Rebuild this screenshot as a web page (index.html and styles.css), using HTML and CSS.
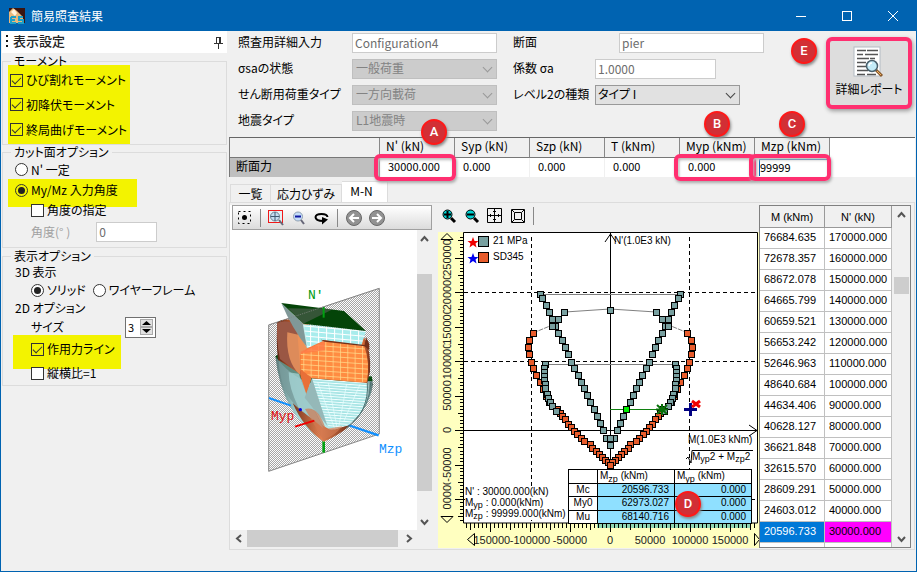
FILE: index.html
```
<!DOCTYPE html>
<html lang="ja">
<head>
    <meta charset="UTF-8">
    <meta name="viewport" content="width=device-width, initial-scale=1.0">
    <title>簡易照査結果</title>
    <link rel="stylesheet" href="styles.css">
</head>
<body>
<div class="window">
  <header class="titlebar">
    <svg class="app-icon" width="18" height="18" viewBox="0 0 18 18">
      <rect x="1" y="1" width="16" height="15" fill="#3a1410"/>
      <path d="M1 16V5l4-4 4 3 6 6v6z" fill="#e8b87c"/>
      <path d="M3 5l3-3 3 4-2 3z" fill="#fff3dc"/>
      <path d="M3 10h5M3 10v6h5M3 13h4M15 10h-4v3h4v3h-5" fill="none" stroke="#1dA0c8" stroke-width="2"/>
    </svg>
    <h1>簡易照査結果</h1>
    <button type="button" class="win-btn" aria-label="最小化"><svg width="11" height="11"><path d="M0 5.500h10" stroke="#fff"/></svg></button>
    <button type="button" class="win-btn" aria-label="最大化"><svg width="11" height="11"><rect x=".5" y=".5" width="9" height="9" fill="none" stroke="#fff"/></svg></button>
    <button type="button" class="win-btn" aria-label="閉じる"><svg width="11" height="11"><path d="M0 0l10 10M10 0L0 10" stroke="#fff"/></svg></button>
  </header>

  <div class="content">
    <aside class="sidebar">
      <div class="panel-head">
        <svg width="4" height="16"><path d="M2 1v15" stroke="#111" stroke-width="2" stroke-dasharray="2 3"/></svg>
        <h2>表示設定</h2>
        <svg width="11" height="13"><path d="M3.500 1v6M7.500 1v6M3 1.500h5M1 7.500h9M5.500 8v5M6.500 2v5" fill="none" stroke="#333"/></svg>
      </div>

      <fieldset class="group">
        <legend>モーメント</legend>
        <div class="mark mark-moment">
          <label><input type="checkbox" checked>ひび割れモーメント</label>
          <label><input type="checkbox" checked>初降伏モーメント</label>
          <label><input type="checkbox" checked>終局曲げモーメント</label>
        </div>
      </fieldset>

      <fieldset class="group group-cut">
        <legend>カット面オプション</legend>
        <label class="line-const"><input type="radio" name="cut">N' 一定</label>
        <div class="mark mark-cut">
          <label><input type="radio" name="cut" checked>My/Mz 入力角度</label>
        </div>
        <label class="indent line-angle"><input type="checkbox">角度の指定</label>
        <div class="indent angle-row">
          <label for="angle">角度(° )</label>
          <input type="text" id="angle" class="box" value="0" disabled>
        </div>
      </fieldset>

      <fieldset class="group group-view">
        <legend>表示オプション</legend>
        <div class="sub">3D 表示</div>
        <div class="indent radios">
          <label><input type="radio" name="view" checked>ソリッド</label>
          <label><input type="radio" name="view">ワイヤーフレーム</label>
        </div>
        <div class="sub">2D オプション</div>
        <div class="indent size-row">
          <label for="size">サイズ</label>
          <div class="spinner">
            <input type="text" id="size" value="3">
            <div>
              <button type="button" aria-label="増やす"><svg width="11" height="6"><path d="M1 5h9L5.500 1z"/></svg></button>
              <button type="button" aria-label="減らす"><svg width="11" height="6"><path d="M1 1h9L5.500 5z"/></svg></button>
            </div>
          </div>
        </div>
        <div class="mark mark-line">
          <label><input type="checkbox" checked>作用力ライン</label>
        </div>
        <label class="indent"><input type="checkbox">縦横比=1</label>
      </fieldset>
    </aside>

    <main class="main">
      <div class="top">
        <div class="fields">
          <div class="field"><label for="conf">照査用詳細入力</label><input type="text" id="conf" class="box wide" value="Configuration4" disabled></div>
          <div class="field"><label for="ssa">σsaの状態</label><span class="select wide"><select id="ssa" disabled><option>一般荷重</option></select></span></div>
          <div class="field"><label for="shear">せん断用荷重タイプ</label><span class="select wide"><select id="shear" disabled><option>一方向載荷</option></select></span></div>
          <div class="field"><label for="quake">地震タイプ</label><span class="select wide"><select id="quake" disabled><option>L1地震時</option></select></span></div>
        </div>
        <div class="fields fields-right">
          <div class="field"><label for="sec" class="label-sec">断面</label><input type="text" id="sec" class="box wide" value="pier" disabled></div>
          <div class="field"><label for="coef">係数 σa</label><input type="text" id="coef" class="box coef" value="1.0000" disabled></div>
          <div class="field"><label for="level">レベル2の種類</label><span class="select wide active"><select id="level"><option>タイプ I</option></select></span></div>
        </div>
        <div class="report">
          <span class="badge badge-e">E</span>
          <button type="button" class="report-btn">
            <svg width="32" height="32" viewBox="0 0 32 32">
              <rect x="1" y="1" width="26" height="29" fill="#fff" stroke="#b4bcc4"/>
              <path d="M4 4.500h9m1 0h11M4 8.500h6m2 0h13M4 12.500h12m1 0h5M4 16.500h9M4 20.500h9M4 24.500h11M4 28.500h8m2 0h9" stroke="#555" stroke-width="1.500"/>
              <path d="M23 24l6 6" stroke="#8a5a2c" stroke-width="3"/>
              <path d="M24 25l4 4" stroke="#f0b060"/>
              <circle cx="19" cy="20" r="5.500" fill="#c4ecf8" stroke="#4a606c" stroke-width="1.500"/>
              <path d="M16 20q0-3 3-3" stroke="#fff" stroke-width="1.500" fill="none"/>
            </svg>
            <span>詳細レポート</span>
          </button>
        </div>
      </div>

      <div class="force-wrap">
      <table class="force">
        <tr>
          <th></th><th>N' (kN)</th><th>Syp (kN)</th><th>Szp (kN)</th><th>T (kNm)</th><th>Myp (kNm)</th><th>Mzp (kNm)</th>
        </tr>
        <tr>
          <th scope="row">断面力</th>
          <td>30000.000<span class="frame"><span class="badge badge-a">A</span></span></td>
          <td>0.000</td>
          <td>0.000</td>
          <td>0.000</td>
          <td>0.000<span class="frame"><span class="badge badge-b">B</span></span></td>
          <td class="edit"><input type="text" value="99999" aria-label="Mzp (kNm)"><span class="frame"><span class="badge badge-b">C</span></span></td>
        </tr>
      </table>
      </div>

      <nav class="tabs">
        <button type="button" class="tab tab-list">一覧</button>
        <button type="button" class="tab tab-strain">応力ひずみ</button>
        <button type="button" class="tab tab-mn on">M-N</button>
      </nav>

      <section class="tab-page">
        <div class="view3d">
          <div class="tools">
            <button type="button" aria-label="全体表示"><svg width="16" height="16"><rect x="1.500" y="1.500" width="12" height="12" fill="none" stroke="#000" stroke-dasharray="2 3"/><circle cx="7.500" cy="7.500" r="2.500"/></svg></button>
            <i></i>
            <button type="button" aria-label="拡大"><svg width="16" height="16"><rect x=".5" y=".5" width="14" height="12" fill="#e4f0f4" stroke="#f01818"/><circle cx="7" cy="6.500" r="4.500" fill="#c4dcf0" stroke="#708090"/><path d="M7 2v9M2.500 6.500h9" stroke="#405870"/><path d="M11 10l4 5" stroke="#667" stroke-width="2"/></svg></button>
            <button type="button" aria-label="縮小"><svg width="16" height="16"><circle cx="7" cy="6.500" r="4.500" fill="#c4dcf8" stroke="#90a0b0"/><path d="M4 6.500h6" stroke="#1018a0" stroke-width="2"/><path d="M10 10l3 4" stroke="#667" stroke-width="2"/></svg></button>
            <button type="button" aria-label="回転"><svg width="16" height="16"><path d="M13.500 7C13 3 2 3 1.500 7c0 3 4 4 8 4" fill="none" stroke="#000" stroke-width="2"/><path d="M8 7l6 2.500-6 5z"/></svg></button>
            <i></i>
            <button type="button" aria-label="戻る"><svg width="18" height="18"><circle cx="9" cy="9" r="7.500" fill="#929292" stroke="#686868"/><path d="M14 9H5M9 5L5 9l4 4" fill="none" stroke="#fff" stroke-width="2"/></svg></button>
            <button type="button" aria-label="進む"><svg width="18" height="18"><circle cx="9" cy="9" r="7.500" fill="#929292" stroke="#686868"/><path d="M4 9h9M9 5l4 4-4 4" fill="none" stroke="#fff" stroke-width="2"/></svg></button>
          </div>
          <div class="canvas3d">
            <svg class="solid" viewBox="0 0 186 300">
              <defs>
                <pattern id="dots" width="6" height="6" patternUnits="userSpaceOnUse"><path d="M0 0h3v3H0zM3 3h3v3H3z" fill="#a4a4a4"/></pattern>
                <pattern id="gridOrange" width="22" height="15" patternUnits="userSpaceOnUse" patternTransform="skewY(4)"><rect width="22" height="15" fill="#ff8c42"/><path d="M0 1.500h22M1.500 0v15" stroke="#ffe090" stroke-width="2"/></pattern>
                <pattern id="gridPale" width="24" height="15" patternUnits="userSpaceOnUse" patternTransform="skewY(5)"><rect width="24" height="15" fill="#a8ecec"/><path d="M0 1.500h24M1.500 0v15" stroke="#fff" stroke-width="3"/></pattern>
                <pattern id="gridCyan" width="26" height="8" patternUnits="userSpaceOnUse" patternTransform="skewY(4)"><rect width="26" height="8" fill="#a4e4e4"/><path d="M0 1.500h26" stroke="#f4ffff" stroke-width="3"/></pattern>
                <linearGradient id="tip" x1="0" x2="1" y1="0" y2="0"><stop offset="0" stop-color="#7a3820"/><stop offset=".5" stop-color="#e08050"/><stop offset="1" stop-color="#702c14"/></linearGradient>
                <linearGradient id="shade" x1="0" x2="1" y1="0" y2="0"><stop offset="0" stop-color="#5c2414"/><stop offset=".25" stop-color="#f07838"/><stop offset=".9" stop-color="#f88040"/><stop offset="1" stop-color="#6a2c18"/></linearGradient>
                <linearGradient id="side" x1="0" x2="1" y1="0" y2="0"><stop offset="0" stop-color="#5c7878"/><stop offset=".25" stop-color="#a8dcdc"/><stop offset=".9" stop-color="#c8f8f8"/><stop offset="1" stop-color="#506868"/></linearGradient>
              </defs>
              <g transform="translate(-1 39) scale(.3333)">
                <path d="M116 168L448 58V495L116 607z" fill="url(#dots)" stroke="#888" stroke-width="3"/>
                <path d="M354 468L446 499" stroke="#1090ff" stroke-width="7"/>
                <path d="M281 513v38" stroke="#00a010" stroke-width="8"/>
                <path d="M136 262l14-6 275 74 4 16q-12 100-148 172Q154 438 136 262z" fill="url(#side)"/>
                <path d="M188 402Q240 450 300 482l62-14q-36 32-81 50-60-40-93-116z" fill="url(#tip)"/>
                <path d="M136 262q8-8 24 0l48 50q100 20 217 10l3 14-188 6q-60-20-104-80z" fill="#064a10"/>
                <path d="M246 328l168 14q6 30-22 88-40 50-88 52-24-30-64-104z" fill="url(#gridCyan)"/>
                <path d="M412 342q6 86-64 136M422 340q0 70-54 120" fill="none" stroke="#4c7070" stroke-width="3"/>
                <path d="M263 340l52 142M295 342l27 138M350 345l-24 130M390 346l-48 110" stroke="#e8ffff" stroke-width="2"/>
                <path d="M146 270Q150 370 206 418l76 60-52-100-22-66z" fill="#789c9c" opacity=".8"/>
                <path d="M176 310l30 4 24 64 50 100-74-62q-30-60-30-106z" fill="#a8d8d8" opacity=".7"/>
                <path d="M142 160q20-14 50-4l212 52q20 40 16 100l-8 34-168-14-14 50-20-64-66-42Q138 220 142 160z" fill="url(#shade)"/>
                <path d="M142 162q24-12 58 4l12 150-62-46q-12-54-8-108z" fill="#9a5744"/>
                <path d="M172 190l52 12 8 36-22 20v60q-44-40-38-128z" fill="#ee9860" opacity=".8"/>
                <path d="M212 254l72-38 118 14q20 50 8 110l-164-14-34-20z" fill="url(#gridOrange)"/>
                <path d="M212 248l72-32v28l-72 10z" fill="#ff7c48" opacity=".8"/>
                <path d="M212 300l32 26-14 50-18-54z" fill="#e87038"/>
                <path d="M154 102l66 64 188 20-14 44-110-16-52 24z" fill="url(#gridPale)"/>
                <path d="M154 102l66 64 12 70q-44-54-78-134z" fill="#809898"/>
                <path d="M220 166l12 70" stroke="#d8ffff" stroke-width="2"/>
                <path d="M154 102l188 24 66 60-188-22z" fill="#044408"/>
                <path d="M174 118l46 46 90-44z" fill="#666" opacity=".5"/>
                <path d="M272 212l132 16 4-24 10 20v20l-14-12-120-14z" fill="#743018"/>
                <path d="M281 114v32" stroke="#00a010" stroke-width="6"/>
                <path d="M246 328l-22 58 68 84z" fill="#95b8b8"/>
                <path d="M225 420q40-10 62 60l50-8q-24 30-58 40z" fill="#d07850" opacity=".7"/>
                <path d="M117 387l66 23" stroke="#1090ff" stroke-width="6"/>
                <path d="M195 473l58-18" stroke="#f00000" stroke-width="6"/>
                <circle cx="211" cy="422" r="5" fill="#0000e0"/>
                <path d="M116 168L448 58" stroke="#888" stroke-width="2" stroke-dasharray="4 3"/>
              </g>
              <g class="axis-name">
                <text x="77" y="69" fill="#009a10">N'</text>
                <text x="40" y="190" fill="#e01010">Myp</text>
                <text x="148" y="223" fill="#1090ff">Mzp</text>
              </g>
            </svg>
            <div class="vbar">
              <svg width="9" height="17"><path d="M1 11l3.500-4L8 11" fill="none" stroke="#555" stroke-width="2"/></svg>
              <b></b>
              <svg width="9" height="17"><path d="M1 7l3.500 4L8 7" fill="none" stroke="#555" stroke-width="2"/></svg>
            </div>
          </div>
          <div class="hbar">
            <svg width="17" height="9"><path d="M11 1L7 4.500 11 8" fill="none" stroke="#555" stroke-width="2"/></svg>
            <b></b>
            <svg width="17" height="9"><path d="M7 1l4 3.500L7 8" fill="none" stroke="#555" stroke-width="2"/></svg>
          </div>
        </div>

        <div class="view2d">
          <div class="tools2">
            <button type="button" aria-label="拡大"><svg width="16" height="16"><circle cx="6.500" cy="6.500" r="4.500" fill="#00d0d0" stroke="#000"/><path d="M3 6.500h7M6.500 3v7" stroke="#000" stroke-width="2"/><path d="M10 10l4 4" stroke="#000" stroke-width="3"/></svg></button>
            <button type="button" aria-label="縮小"><svg width="16" height="16"><circle cx="6.500" cy="6.500" r="4.500" fill="#00d0d0" stroke="#000"/><path d="M3 6.500h7" stroke="#000" stroke-width="2"/><path d="M10 10l4 4" stroke="#000" stroke-width="3"/></svg></button>
            <button type="button" aria-label="移動"><svg width="16" height="16"><path d="M.5 .5h14v14H.5zM7.500 1v13M1 7.500h13M6 3.500h3M6 11.500h3M3.500 6v3M11.500 6v3" fill="none" stroke="#000"/></svg></button>
            <button type="button" aria-label="全体"><svg width="16" height="16"><path d="M1.500 1.500h13v13h-13zM4.500 4.500h7v7h-7zM2 2l2 2M14 2l-2 2M2 14l2-2M14 14l-2-2" fill="none" stroke="#000"/></svg></button>
            <i></i>
          </div>
          <svg id="chart" class="chart" viewBox="0 0 321 316">
            <rect width="321" height="316" fill="#ffffc0"/>
            <path d="M159 291h154v5H159z" fill="#8fd8b4"/>
            <g id="ticks" stroke="#000"></g>
            <g id="labels"></g>
            <path d="M3 7.500h12L9 1.500zM3 284.500h12l-6 6zM36.500 301.500v12l-7-6zM316.500 301.500v12l5-6z" fill="#ffffc0" stroke="#000"/>
            <path d="M25.500 .5h294v290.500h-294z" fill="#fff" stroke="#000"/>
            <path d="M93.500 5v286M251.500 5v286M26 60.500h293M26 129.500h293M26 267.500h293" stroke="#000" stroke-dasharray="4 3"/>
            <path d="M172.500 1v290M26 198.500h293" stroke="#000"/>
            <path d="M167 10l5.500-8 5.500 8M311 193l8 5.500-8 5.500" fill="none" stroke="#000"/>
            <path d="M102 62.500h140M107 132.500h130M127 80l45-3 46 3" fill="none" stroke="#808080"/>
            <path d="M95 101l17-7M250 101l-17-7" stroke="#808080" stroke-dasharray="5 1"/>
            <path d="M172 177.500h52" stroke="#108010"/>
            <g id="marks" stroke="#000"></g>
            <path d="M219 173l10 9m0-9l-10 9m5-10v11m-6-5.500h12" stroke="#087008" stroke-width="2"/>
            <path d="M252.500 171v13M246 177.500h13" stroke="#000080" stroke-width="3"/>
            <path d="M254 169l8 6m0-6l-8 6" stroke="#f00000" stroke-width="3"/>
            <path d="M35 5l1.500 4h4l-3 2.500 1 4L35 13l-3.500 2.500 1-4-3-2.500h4z" fill="#f00000"/>
            <path d="M35 21l1.500 4h4l-3 2.500 1 4L35 29l-3.500 2.500 1-4-3-2.500h4z" fill="#0000f0"/>
            <rect x="40.500" y="4.500" width="10" height="10" fill="#78a0a0" stroke="#000"/>
            <rect x="40.500" y="20.500" width="10" height="10" fill="#e85c2c" stroke="#000"/>
            <path d="M27 254h102v34H27z" fill="#fff"/>
            <g class="note">
              <text x="55" y="12">21 MPa</text>
              <text x="55" y="28">SD345</text>
              <text x="176" y="12">N'(1.0E3 kN)</text>
              <text x="250" y="211">M(1.0E3 kNm)</text>
              <text x="254" y="228">M<tspan class="low" dy="2">yp</tspan><tspan dy="-2">2 + M</tspan><tspan class="low" dy="2">zp</tspan><tspan dy="-2">2</tspan></text>
              <text x="27" y="263">N' : 30000.000(kN)</text>
              <text x="27" y="274">M<tspan class="low" dy="2">yp</tspan><tspan dy="-2"> : 0.000(kNm)</tspan></text>
              <text x="27" y="285">M<tspan class="low" dy="2">zp</tspan><tspan dy="-2"> : 99999.000(kNm)</tspan></text>
            </g>
            <path d="M248 227l2-2 3 6 1-12.500h61" fill="none" stroke="#000"/>
            <foreignObject x="130" y="237" width="184" height="55">
              <table class="result">
                <tr><th></th><th>M<sub>zp</sub> (kNm)</th><th>M<sub>yp</sub> (kNm)</th></tr>
                <tr><th>Mc</th><td>20596.733</td><td>0.000</td></tr>
                <tr><th>My0</th><td>62973.027</td><td>0.000</td></tr>
                <tr><th>Mu</th><td>68140.716</td><td>0.000</td></tr>
              </table>
            </foreignObject>
          </svg>
          <span class="badge badge-d">D</span>
        </div>

        <div class="list">
          <table>
            <thead><tr><th>M (kNm)</th><th>N' (kN)</th></tr></thead>
            <tbody>
              <tr><td>76684.635</td><td>170000.000</td></tr>
              <tr><td>72678.357</td><td>160000.000</td></tr>
              <tr><td>68672.078</td><td>150000.000</td></tr>
              <tr><td>64665.799</td><td>140000.000</td></tr>
              <tr><td>60659.521</td><td>130000.000</td></tr>
              <tr><td>56653.242</td><td>120000.000</td></tr>
              <tr><td>52646.963</td><td>110000.000</td></tr>
              <tr><td>48640.684</td><td>100000.000</td></tr>
              <tr><td>44634.406</td><td>90000.000</td></tr>
              <tr><td>40628.127</td><td>80000.000</td></tr>
              <tr><td>36621.848</td><td>70000.000</td></tr>
              <tr><td>32615.570</td><td>60000.000</td></tr>
              <tr><td>28609.291</td><td>50000.000</td></tr>
              <tr><td>24603.012</td><td>40000.000</td></tr>
              <tr class="current"><td>20596.733</td><td>30000.000</td></tr>
              <tr class="rest"><td></td><td></td></tr>
            </tbody>
          </table>
          <div class="vbar list-bar">
            <svg width="9" height="17"><path d="M1 11l3.500-4L8 11" fill="none" stroke="#555" stroke-width="2"/></svg>
            <b></b>
            <svg width="9" height="17"><path d="M1 7l3.500 4L8 7" fill="none" stroke="#555" stroke-width="2"/></svg>
          </div>
        </div>
      </section>
    </main>
  </div>
</div>
<script src="chart.js"></script>
</body>
</html>
```
FILE: styles.css
```
* {
  box-sizing: border-box;
  }
body {
  margin: 0;
  font-family: "Noto Sans CJK JP", sans-serif;
  font-size: 12px;
  line-height: 16px;
  color: #000;
  background-color: #f0f0f0;
  font-feature-settings: "palt";
  }
h1, h2 {
  margin: 0;
  font-size: 12px;
  font-weight: 400;
  }
button, input, select {
  font: inherit;
  font-feature-settings: inherit;
  color: inherit;
  margin: 0;
  padding: 0;
  }
button {
  background: none;
  border: 0;
  }
svg {
  display: block;
  flex: none;
  }
.window {
  min-height: 100vh;
  border: 1px solid #0063b1;
  display: flex;
  flex-direction: column;
  }
.titlebar {
  display: flex;
  align-items: center;
  height: 30px;
  padding-left: 7px;
  background-color: #0063b1;
  color: #fff;
  }
.titlebar h1 {
  flex: 1;
  margin-left: 5px;
  font-feature-settings: normal;
  }
.win-btn {
  width: 46px;
  height: 30px;
  display: flex;
  align-items: center;
  justify-content: center;
  }
.content {
  flex: 1;
  display: flex;
  align-items: flex-start;
  }

/* sidebar */
.sidebar {
  width: 227px;
  flex: none;
  padding: 0 1px;
  }
.panel-head {
  display: flex;
  align-items: center;
  height: 22px;
  padding: 0 3px;
  background-color: #fff;
  }
.panel-head h2 {
  flex: 1;
  margin-left: 4px;
  padding-bottom: 2px;
  font-weight: 500;
  font-size: 13px;
  color: #222;
  font-feature-settings: normal;
  }
.group {
  margin: 0;
  padding: 0 6px;
  border: 1px solid #dcdcdc;
  min-width: 0;
  }
.group legend {
  height: 16px;
  margin-left: 2px;
  padding: 0 3px;
  }
.group label {
  display: flex;
  align-items: center;
  white-space: nowrap;
  }
.mark {
  width: max-content;
  background-color: #f3f300;
  }
.mark-moment {
  height: 79px;
  margin: -4px 0 0 -1px;
  padding: 3px 3px 0 2px;
  }
.mark-moment label {
  height: 25px;
  }
.mark-moment label:first-child {
  height: 24px;
  }
input[type=checkbox], input[type=radio] {
  appearance: none;
  flex: none;
  width: 13px;
  height: 13px;
  margin-right: 3px;
  border: 1px solid #333;
  background-color: #fff;
  }
input[type=radio] {
  border-radius: 50%;
  }
.mark input[type=checkbox], .mark input[type=radio] {
  background-color: #f3f300;
  }
input[type=checkbox]:checked::before {
  content: "";
  display: block;
  width: 8px;
  height: 4px;
  margin: 2px 0 0 1px;
  border: solid #333;
  border-width: 0 0 1px 1px;
  transform: rotate(-45deg);
  }
input[type=radio]:checked::before {
  content: "";
  display: block;
  width: 7px;
  height: 7px;
  margin: 2px;
  border-radius: 50%;
  background-color: #222;
  }
.group-cut {
  margin-top: -1px;
  padding-bottom: 5px;
  }
.line-const {
  height: 19px;
  padding-left: 6px;
  }
.mark-cut {
  height: 28px;
  margin-left: -1px;
  padding: 2px 19px 0 7px;
  }
.mark-cut label {
  height: 18px;
  }
.indent {
  margin-left: 22px;
  }
.line-angle {
  height: 16px;
  margin-top: -5px;
  }
.angle-row {
  display: flex;
  align-items: center;
  gap: 26px;
  margin-top: 4px;
  color: #a0a0a0;
  }
.box {
  height: 20px;
  padding: 0 0 2px 2px;
  border: 1px solid #ccc;
  background-color: #fff;
  color: #6d6d6d;
  }
.angle-row .box {
  width: 61px;
  }
.group-view {
  height: 138px;
  }
.group-view .sub {
  margin-left: 6px;
  }
.radios {
  display: flex;
  gap: 7px;
  height: 20px;
  }
.size-row {
  display: flex;
  align-items: center;
  justify-content: space-between;
  width: 125px;
  height: 22px;
  }
.spinner {
  display: flex;
  width: 31px;
  height: 21px;
  padding: 1px 2px;
  border: 1px solid #707070;
  background-color: #fff;
  }
.spinner input {
  width: 12px;
  height: 16px;
  border: 0;
  font-size: 11px;
  }
.spinner button {
  display: block;
  width: 13px;
  height: 8px;
  border: 1px solid #aaa;
  background-color: #e1e1e1;
  }
.mark-line {
  height: 34px;
  margin: -3px 0 0 4px;
  padding: 6px 6px 0 18px;
  }
.mark-line + label {
  margin-top: -4px;
  }

/* settings */
.main {
  flex: 1;
  min-width: 0;
  padding: 2px 1px 0;
  }
.top {
  display: flex;
  gap: 16px;
  padding-left: 9px;
  }
.fields {
  display: flex;
  flex-direction: column;
  gap: 6px;
  }
.field {
  display: flex;
  align-items: center;
  height: 20px;
  }
.field label {
  width: 114px;
  padding-bottom: 2px;
  white-space: nowrap;
  }
.fields-right label {
  width: 82px;
  }
.fields-right .label-sec {
  width: 106px;
  }
.wide {
  width: 145px;
  }
.coef {
  width: 121px;
  }
.select {
  position: relative;
  height: 20px;
  }
.select select {
  appearance: none;
  width: 100%;
  height: 20px;
  padding: 0 0 2px 3px;
  border: 1px solid #bfbfbf;
  border-radius: 0;
  background-color: #ccc;
  color: #838383;
  opacity: 1;
  }
.select.active select {
  border-color: #999;
  background-color: #e1e1e1;
  color: #000;
  padding-left: 2px;
  }
.select::after {
  content: "";
  position: absolute;
  right: 6px;
  top: 5px;
  width: 6px;
  height: 6px;
  border: solid #999;
  border-width: 0 1px 1px 0;
  transform: rotate(45deg);
  }
.select.active::after {
  border-color: #444;
  }
.report {
  position: relative;
  margin-left: auto;
  padding: 4px 3px 0 0;
  }
.report-btn {
  display: flex;
  flex-direction: column;
  align-items: center;
  justify-content: center;
  gap: 3px;
  width: 86px;
  height: 72px;
  padding-bottom: 3px;
  border: 4px solid #ff2f70;
  border-radius: 6px;
  background-color: #ddd;
  box-shadow: 1px 2px 4px #999;
  }

/* lettered callouts */
.badge {
  position: absolute;
  z-index: 2;
  width: 26px;
  height: 26px;
  border: 2px solid #ff1818;
  border-radius: 50%;
  background-color: #d22f35;
  box-shadow: 1px 2px 3px #888;
  color: #fff;
  font: 500 13px/22px Roboto, sans-serif;
  text-align: center;
  }
.badge-e {
  left: -35px;
  top: 5px;
  }
.badge-a {
  left: 43px;
  top: -39px;
  }
.badge-b {
  left: 26px;
  top: -47px;
  }
.badge-d {
  right: 58px;
  bottom: 31px;
  }
.frame {
  position: absolute;
  inset: -4px -2px -4px -6px;
  border: 4px solid #ff2f70;
  border-radius: 6px;
  box-shadow: 1px 2px 3px #aaa, inset 1px 2px 3px #bbb;
  }

/* section forces */
.force-wrap {
  margin-top: 6px;
  border-top: 1px solid #666;
  border-left: 1px solid #777;
  background-color: #fff;
  }
.force {
  width: 600px;
  table-layout: fixed;
  border-collapse: separate;
  border-spacing: 0;
  font-size: 11px;
  }
.force th, .force td {
  position: relative;
  width: 75px;
  height: 19px;
  padding: 0 0 4px 6px;
  border-right: 1px solid #888;
  line-height: 14px;
  text-align: left;
  font-weight: 400;
  }
.force th {
  height: 20px;
  border-bottom: 1px solid #777;
  background-color: #f0f0f0;
  font-size: 12px;
  }
.force th:first-child {
  width: 150px;
  }
.force th[scope=row] {
  background-color: #bfbfbf;
  border-bottom: 0;
  height: 19px;
  }
.force td {
  padding-left: 8px;
  border-color: #f0f0f0;
  }
.force .edit {
  padding: 0 0 0 4px;
  }
.edit input {
  display: block;
  width: 68px;
  height: 17px;
  padding-bottom: 2px;
  border: 1px solid #0063b1;
  border-width: 1px 0 0 1px;
  }

/* tabs */
.tabs {
  display: flex;
  align-items: flex-end;
  height: 25px;
  padding-left: 1px;
  }
.tab {
  height: 18px;
  border: 1px solid #dcdcdc;
  border-width: 1px 1px 0 0;
  white-space: nowrap;
  }
.tab-list {
  width: 41px;
  border-left-width: 1px;
  }
.tab-strain {
  width: 71px;
  }
.tab.on {
  width: 46px;
  height: 21px;
  padding: 0 6px 3px 0;
  background-color: #fff;
  }
.tab-page {
  display: flex;
  align-items: flex-start;
  padding: 2px 3px 1px 0;
  border: 1px solid #dcdcdc;
  background-color: #f0f0f0;
  }

/* 3d */
.view3d {
  width: 202px;
  flex: none;
  background-color: #fff;
  }
.tools {
  display: flex;
  align-items: center;
  gap: 7px;
  height: 25px;
  margin-left: 2px;
  padding-left: 4px;
  border: 1px solid #a0a0a0;
  background: linear-gradient(#fff, #dcdcdc);
  }
.tools i, .tools2 i {
  width: 1px;
  height: 18px;
  background-color: #888;
  }
.tools button:last-child {
  margin-left: -2px;
  }
.canvas3d {
  display: flex;
  margin-left: 1px;
  }
.solid {
  flex: 1;
  min-width: 0;
  }
.axis-name {
  font: 13px "Liberation Mono", monospace;
  }
.vbar {
  display: flex;
  flex-direction: column;
  align-items: center;
  width: 15px;
  background-color: #f0f0f0;
  }
.vbar b {
  flex: 1;
  width: 15px;
  margin: 27px 0 22px;
  background-color: #cdcdcd;
  }
.hbar {
  display: flex;
  align-items: center;
  height: 17px;
  padding-right: 15px;
  background-color: #f0f0f0;
  }
.hbar b {
  flex: 1;
  height: 17px;
  margin-right: 2px;
  background-color: #cdcdcd;
  }

/* 2d */
.view2d {
  position: relative;
  flex: 1;
  min-width: 0;
  padding-left: 6px;
  }
.tools2 {
  display: flex;
  align-items: center;
  gap: 7px;
  height: 27px;
  padding: 0 0 6px 3px;
  }
.chart {
  width: 100%;
  height: auto;
  }
.note, #labels {
  font-family: "Liberation Sans", sans-serif;
  font-size: 10px;
  }
#labels {
  font-size: 11px;
  text-anchor: middle;
  fill: #222;
  }
.low {
  font-size: 9px;
  }
.result {
  width: 184px;
  height: 55px;
  table-layout: fixed;
  border-collapse: collapse;
  background-color: #fff;
  font: 10px/12px "Liberation Sans", sans-serif;
  }
.result th, .result td {
  height: 13px;
  padding: 0;
  border: 1px solid #000;
  font-weight: 400;
  line-height: 12px;
  }
.result th:first-child {
  width: 29px;
  }
.result td {
  padding-right: 5px;
  background-color: #8fe0ff;
  text-align: right;
  }
.result tr:first-child th {
  padding-left: 2px;
  text-align: left;
  }
.result sub {
  font-size: 9px;
  line-height: 0;
  }

/* value list */
.list {
  display: flex;
  flex: none;
  width: 152px;
  border: 1px solid #808080;
  background-color: #fff;
  }
.list table {
  flex: 1;
  table-layout: fixed;
  border-collapse: separate;
  border-spacing: 0;
  font: 11px/16px "Liberation Sans", sans-serif;
  }
.list th, .list td {
  height: 21px;
  padding: 0 0 2px 4px;
  border: solid #c0c0c0;
  border-width: 0 1px 1px 0;
  font-weight: 400;
  }
.list th {
  height: 22px;
  padding: 0;
  border-color: #999;
  background-color: #f0f0f0;
  }
.list th:first-child {
  width: 65px;
  }
.list .current td {
  background-color: #0078d7;
  color: #fff;
  }
.list .current td + td {
  background-color: #f0f;
  color: #000;
  }
.list .rest td {
  height: 4px;
  padding: 0;
  border-bottom: 0;
  }
.list-bar {
  width: 18px;
  }
.list-bar b {
  flex: 0 0 17px;
  margin: 54px 0 auto;
  }
```
FILE: chart.js
```
var NS = "http://www.w3.org/2000/svg";
var X0 = 172, Y0 = 198;      // origin of the chart
var STEP_X = 40, STEP_Y = 34.5; // 50000 kNm / 50000 kN

// right half, offset from the N' axis, the left half is mirrored
var steel = [[77,101],[81,108],[82,115],[81,122],[79,130],[77,136],[74,143],[70,150],[67,157],[64,164],[61,170],
  [58,174],[53,177],[50,181],[48,184],[45,187],[42,192],[39,195],[36,199],[33,202],[29,206],[26,209],
  [20,212],[18,216],[14,219],[11,222],[8,225],[5,228],[2,230],[0,233]];
var crack = [[65,132],[66,136],[66,140],[66,144],[66,148],[65,152],[65,156],[63,162],[62,166],[60,170],[58,174],[54,179]];
var concrete = [[70,62],[68,66],[64,73],[61,80],[58,87],[46,80],[52,87],[55,94],[58,94],[52,101],[48,108],[45,115],
  [42,122],[39,130],[36,136],[32,143],[29,150],[26,156],[23,163],[20,170],[16,177],[13,184],[10,191],[7,198],[4,206],[0,206],[0,213],[0,78]];

function add(parent, name, attrs, text) {
    var el = document.createElementNS(NS, name);
    for (var key in attrs) {
        el.setAttribute(key, attrs[key]);
    }
    if (text) el.textContent = text;
    document.getElementById(parent).appendChild(el);
}
function square(x, y, color) {
    add("marks", "rect", { x: x - 2.5, y: y - 2.5, width: 6, height: 6, fill: color });
}
function drawSeries(points, color) {
    points.forEach(function (p) {
        square(X0 - p[0], p[1], color);
        square(X0 + p[0], p[1], color);
    });
}
function drawTicks() {
    for (var i = -36; i <= 36; i++) {
        var x = Math.round(X0 + i * STEP_X / 10) + 0.5;
        var len = i % 10 === 0 ? 9 : i % 5 === 0 ? 7 : 5;
        if (x > 25 && x < 319) add("ticks", "path", { d: "M" + x + " 291v" + len });
    }
    for (var j = -26; j <= 56; j++) {
        var y = Math.round(Y0 - j * STEP_Y / 10) + 0.5;
        var w = j % 10 === 0 ? 8 : j % 5 === 0 ? 5 : 3;
        if (y > 1 && y < 290) add("ticks", "path", { d: "M25 " + y + "h-" + w });
    }
}
function drawLabels() {
    for (var i = -2; i <= 5; i++) {
        var y = Y0 - i * STEP_Y;
        add("labels", "rect", { x: 2, y: y - 18, width: 13, height: 36, fill: "#ffffc0" });
        add("labels", "text", { transform: "translate(13 " + y + ") rotate(-90)" }, String(i * 50000));
    }
    add("labels", "rect", { x: 2, y: 278, width: 13, height: 20, fill: "#ffffc0" });
    for (var k = -3; k <= 3; k++) {
        add("labels", "text", { x: X0 + k * STEP_X, y: 312 }, String(k * 50000));
    }
}

drawTicks();
drawLabels();
drawSeries(steel, "#e85c2c");
drawSeries(crack, "#78a0a0");
drawSeries(concrete, "#78a0a0");
square(X0 + 16, 177, "#00f000");
```
